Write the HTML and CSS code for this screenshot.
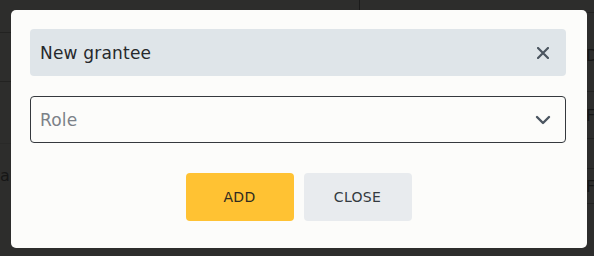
FILE: index.html
```html
<!DOCTYPE html>
<html lang="en">
  <head>
    <meta charset="UTF-8" />
    <meta name="viewport" content="width=device-width, initial-scale=1.0" />
    <title>New grantee</title>

    <link rel="stylesheet" href="styles.css">
  </head>
  <body>
    <div class="page">
      <div class="col col-left">
        <div class="row r1"></div>
        <div class="row r2"></div>
        <div class="row r3"></div>
        <div class="row r4"><span>a</span></div>
      </div>
      <div class="col col-right">
        <div class="row q1"></div>
        <div class="row q2"><span>D</span></div>
        <div class="row q3"><span>F</span></div>
        <div class="row q4"></div>
        <div class="row q5"><span>F</span></div>
      </div>
    </div>

    <div class="overlay">
      <div class="modal">
        <div class="modal-head">
          <span class="modal-title">New grantee</span>
          <button class="icon-btn" aria-label="close">
            <svg width="12" height="12" viewBox="0 0 12 12">
              <path d="M1 1 L11 11 M11 1 L1 11" stroke="#4b5560" stroke-width="2.2" stroke-linecap="round" />
            </svg>
          </button>
        </div>

        <div class="select">
          <span class="placeholder">Role</span>
          <svg width="16" height="10" viewBox="0 0 16 10">
            <path d="M2 2 L8 8 L14 2" fill="none" stroke="#4b5560" stroke-width="2.4" stroke-linecap="round" stroke-linejoin="round" />
          </svg>
        </div>

        <div class="actions">
          <button class="btn btn-add">ADD</button>
          <button class="btn btn-close">CLOSE</button>
        </div>
      </div>
    </div>
  </body>
</html>
```

FILE: styles.css
```css
*,
*::before,
*::after {
  box-sizing: border-box;
  margin: 0;
  padding: 0;
}

body {
  width: 594px;
  height: 256px;
  overflow: hidden;
  background-color: #2d2d2c;
  font-family: "DejaVu Sans", "Noto Sans", sans-serif;
}

/* page behind the dialog */
.page {
  display: flex;
  justify-content: space-between;
  height: 256px;
}

.col {
  display: flex;
  flex-direction: column;
}

.col-left {
  width: 11px;
}

.col-right {
  width: 7px;
}

.row {
  border-bottom: 1px solid #222221;
  color: #161616;
  font-size: 16px;
  display: flex;
  align-items: center;
  overflow: hidden;
}

.r1 { height: 33px; }
.r2 { height: 49px; }
.r3 { height: 62px; border-bottom-color: #292928; }
.r4 { height: 62px; border-bottom: none; }

.q1 { height: 13px; border-left: 1px solid #1b1b1b; margin-left: -228px; width: 235px; }
.q2 { height: 79px; padding-top: 6px; }
.q3 { height: 47px; }
.q4 { height: 30px; }
.q5 { height: 35px; }

.col-right .row span {
  margin-left: -1px;
}

/* dialog */
.overlay {
  position: absolute;
  inset: 0;
  padding: 10px 0 0 11px;
}

.modal {
  width: 576px;
  height: 238px;
  background-color: #fcfcfa;
  border-radius: 5px;
  padding: 19px 21px 0 19px;
  display: flex;
  flex-direction: column;
}

.modal-head {
  height: 47px;
  background-color: #dfe5e9;
  border-radius: 4px;
  display: flex;
  align-items: center;
  justify-content: space-between;
  padding: 0 17px 0 10px;
}

.modal-title {
  font-size: 17px;
  color: #26292c;
  letter-spacing: 0.2px;
}

.icon-btn {
  border: none;
  background: none;
  display: flex;
  cursor: pointer;
}

.select {
  margin-top: 20px;
  height: 47px;
  border: 1px solid #35393d;
  border-radius: 4px;
  display: flex;
  align-items: center;
  justify-content: space-between;
  padding: 0 14px 0 9px;
}

.placeholder {
  font-size: 17px;
  color: #7b8188;
  letter-spacing: 0.2px;
}

.actions {
  margin-top: 30px;
  display: flex;
  justify-content: center;
  gap: 10px;
  padding-left: 1px;
}

.btn {
  width: 108px;
  height: 48px;
  border: none;
  border-radius: 4px;
  font-family: inherit;
  font-size: 14px;
  letter-spacing: 0.3px;
  cursor: pointer;
}

.btn-add {
  background-color: #ffc233;
  color: #2f2b20;
}

.btn-close {
  background-color: #e8ebee;
  color: #343a40;
}
```
